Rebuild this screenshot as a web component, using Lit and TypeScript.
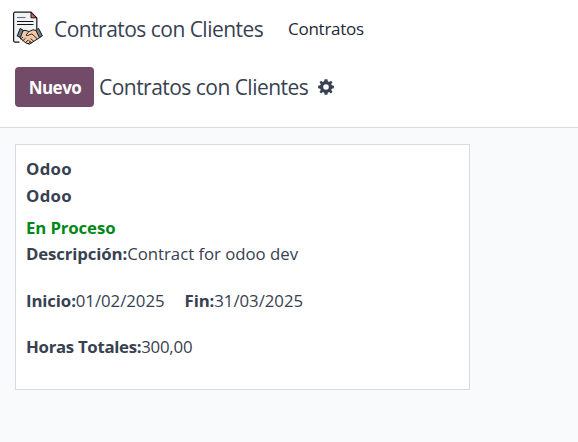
import { LitElement, html, css, svg } from "lit";
import { customElement } from "lit/decorators.js";

const contractIcon = svg`
  <path d="M7 31.5H3.2Q1.8 31.5 1.8 30V2.8Q1.8 1.4 3.2 1.4H19L25 7.2V19L7 25Z" fill="#eff3f5"/>
  <path d="M7.5 31.2H3.2Q1.6 31.2 1.6 29.6V2.8Q1.6 1.2 3.2 1.2H19L24.8 7V18" fill="none" stroke="#161616" stroke-width="1.2"/>
  <path d="M19 1.4V6.8H24.6Z" fill="#ee5a64" stroke="#161616" stroke-width="1"/>
  <path d="M5 6.5H13.5" stroke="#687078" stroke-width="1.1"/>
  <path d="M5 10.5H21.5M5 13.5H21.5" stroke="#161616" stroke-width="1.1"/>
  <path d="M9 20.5L13 19.3L17 20.5L21 18.8L26 19.8L28.5 26L17.5 33.2L14 32L8 27Z" fill="#f2c9a8" stroke="#161616" stroke-width="1"/>
  <path d="M17 20.5L14 24.2Q15.5 25.6 18 23.4L20 23L25.5 28" fill="#f8dcc3" stroke="#161616" stroke-width="0.9"/>
  <path d="M8.5 28.2L11 26M10.5 30L13.5 27.2M13 32L16.2 29M16 33L18.5 30.7M18.5 27.5L22 30.5M16.5 29.5L20 32" stroke="#161616" stroke-width="0.9"/>
  <path d="M8.2 17.4L11.2 19.2L8.4 26.4L5.2 25Z" fill="#6b7d8b" stroke="#161616" stroke-width="1"/>
  <path d="M26.6 17.4L23.8 19.2L27.4 26.6L30.4 24.8Z" fill="#6b7d8b" stroke="#161616" stroke-width="1"/>`;

@customElement("app-root")
export class AppRoot extends LitElement {
  static styles = css`
    :host {
      display: flex;
      flex-direction: column;
      height: 100vh;
      background: #f9fafb;
      color: #374151;
      font: 400 16.8px/26px "Open Sans", "Noto Sans", sans-serif;
      white-space: nowrap;
    }
    .top { background: #fff; height: 127px; border-bottom: 1px solid #d8dadd; flex: none; }
    .nav { display: flex; align-items: center; height: 58px; padding-left: 12px; }
    .logo { width: 32px; height: 36px; flex: none; }
    .brand { font-size: 21px; margin-left: 10px; width: 234px; letter-spacing: -0.53px; }
    .menu { color: #1f2937; font-size: 17px; letter-spacing: -0.25px; }
    .bar { display: flex; align-items: center; height: 58px; padding-left: 15px; }
    .new {
      width: 79px; height: 40px; border: 0; border-radius: 4px; padding: 0 0 0 1px;
      background: #714b67; color: #fff; font: 700 17px "Open Sans", sans-serif; letter-spacing: -0.5px;
    }
    .title { font-size: 21px; margin-left: 5px; width: 219px; letter-spacing: -0.53px; }
    .gear { width: 16px; height: 16px; }
    .card {
      box-sizing: border-box; width: 455px; height: 246px; margin: 16px 0 0 15px;
      padding: 11px 10px; background: #fff; border: 1px solid #d8dadd;
      display: flex; flex-direction: column;
    }
    b { font-weight: 700; letter-spacing: -0.12px; }
    .name b { letter-spacing: 0.3px; }
    .row { height: 26px; display: flex; flex: none; }
    .row span { letter-spacing: -0.03px; }
    .second { margin-top: 1px; }
    .state { margin-top: 6px; color: #008818; }
    .gap { margin-top: 21px; }
    .hours { margin-top: 20px; }
    .hours b { letter-spacing: -0.3px; }
    .hours span { letter-spacing: -0.2px; }
    .end { margin-left: 20px; }
  `;

  render() {
    return html`
      <header class="top">
        <nav class="nav">
          <svg class="logo" viewBox="0 0 32 36">${contractIcon}</svg>
          <span class="brand">Contratos con Clientes</span>
          <span class="menu">Contratos</span>
        </nav>
        <div class="bar">
          <button class="new">Nuevo</button>
          <span class="title">Contratos con Clientes</span>
          <svg class="gear" viewBox="0 0 16 16">
            <path fill="#374151" fill-rule="evenodd" d="M6.6 0.2H9.4L9.8 2.3L11.2 2.9L13 1.7L14.5 3.2L13.2 5L13.8 6.3L15.9 6.7V9.3L13.8 9.7L13.2 11L14.5 12.8L13 14.4L11.2 13.1L9.8 13.7L9.4 15.8H6.6L6.2 13.7L4.8 13.1L3 14.4L1.5 12.8L2.8 11L2.2 9.7L0.1 9.3V6.7L2.2 6.3L2.8 5L1.5 3.2L3 1.7L4.8 2.9L6.2 2.3ZM8 5.2A2.8 2.8 0 1 0 8 10.8A2.8 2.8 0 1 0 8 5.2Z"/>
          </svg>
        </div>
      </header>
      <article class="card">
        <div class="row name"><b>Odoo</b></div>
        <div class="row name second"><b>Odoo</b></div>
        <div class="row state"><b>En Proceso</b></div>
        <div class="row"><b>Descripción:</b><span>Contract for odoo dev</span></div>
        <div class="row gap">
          <b>Inicio:</b><span>01/02/2025</span>
          <b class="end">Fin:</b><span>31/03/2025</span>
        </div>
        <div class="row hours"><b>Horas Totales:</b><span>300,00</span></div>
      </article>
    `;
  }
}
